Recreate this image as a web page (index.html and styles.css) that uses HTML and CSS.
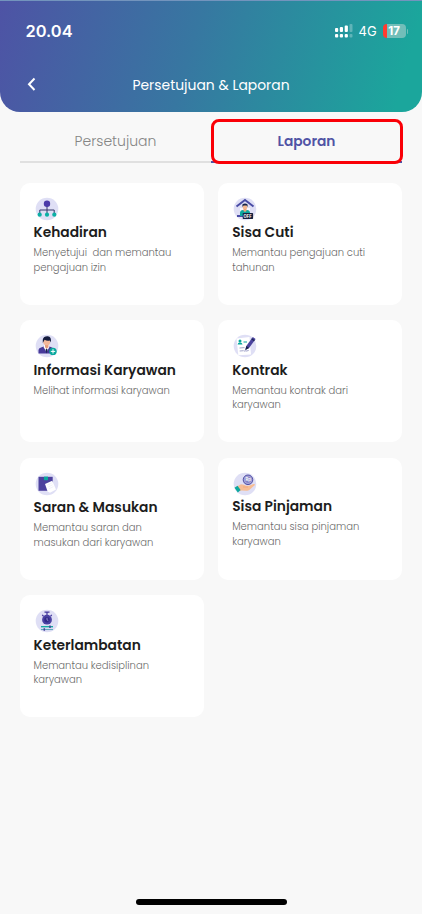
FILE: index.html
```html
<!DOCTYPE html>
<html lang="id">
<head>
<meta charset="utf-8">
<meta name="viewport" content="width=device-width, initial-scale=1">
<title>Persetujuan &amp; Laporan</title>
<link rel="stylesheet" href="styles.css">
</head>
<body>
<div class="screen">
  <header class="header">
    <div class="status">
      <span class="time">20.04</span>
      <div class="indicators">
        <svg class="signal" width="18" height="14" viewBox="0 0 18 14" fill="#fff"><rect x="0" y="4" width="3.2" height="4" rx="1"/><rect x="4.8" y="3" width="3.2" height="5" rx="1"/><rect x="9.7" y="1.5" width="3.2" height="6.5" rx="1"/><rect x="14.5" y="0" width="3" height="8" rx="1" opacity=".28"/><rect x="0" y="10" width="3.2" height="3.6" rx="1"/><rect x="4.8" y="10" width="3.2" height="3.6" rx="1"/><rect x="9.7" y="10" width="3.2" height="3.6" rx="1"/><rect x="14.5" y="10" width="3" height="3.6" rx="1" opacity=".28"/></svg>
        <span class="network">4G</span>
        <span class="battery">17</span><span class="battery-cap"></span>
      </div>
    </div>
    <div class="nav">
      <svg class="back" width="10" height="14" viewBox="0 0 10 14" fill="none" stroke="#fff" stroke-width="2"><path d="M8.5 1.5 3 7.2 8.5 13"/></svg>
      <h1 class="title">Persetujuan &amp; Laporan</h1>
    </div>
  </header>
  <nav class="tabs">
    <span class="tab">Persetujuan</span>
    <span class="tab active">Laporan</span>
  </nav>
  <main class="grid">
    <article class="card">
      <svg class="icon" viewBox="0 0 24 24"><circle cx="12" cy="12" r="11.3" fill="#dfdff5"/><path d="M12 8v10M4.8 17v-4h14.4v4" fill="none" stroke="#34366b" stroke-width="1"/><circle cx="12" cy="6.7" r="3.2" fill="#4b3aa8"/><g fill="#0bb0a5"><circle cx="4.7" cy="17.7" r="2.1"/><circle cx="12" cy="17.7" r="2.1"/><circle cx="19.3" cy="17.7" r="2.1"/></g></svg>
      <h2 class="name">Kehadiran</h2>
      <p class="desc">Menyetujui&nbsp; dan memantau<br>pengajuan izin</p>
    </article>
    <article class="card">
      <svg class="icon" viewBox="0 0 24 24"><circle cx="12" cy="12" r="11.3" fill="#dfdff5"/><path d="M7 11h10v9H7z" fill="#f7f6ff"/><path d="M3.5 9.5 12 3l8.5 6.5" fill="none" stroke="#494ca5" stroke-width="2"/><path d="M4 19h8" stroke="#494ca5" stroke-width="2"/><path d="M7 19v-3q0-3 3-3h4q3 0 3 3v3z" fill="#0ba89f"/><path d="M10.5 11h3v3l-1.5 1-1.5-1z" fill="#e9a77e"/><circle cx="12" cy="9.9" r="2.4" fill="#f4b890"/><path d="M9.4 10V7.5q2.6-2 5.2 0V10l-1-1.5h-3z" fill="#182449"/><rect x="9.7" y="16" width="10.4" height="6" rx=".7" fill="#17213f"/><text class="off" x="10.5" y="20.6">OFF</text></svg>
      <h2 class="name">Sisa Cuti</h2>
      <p class="desc">Memantau pengajuan cuti<br>tahunan</p>
    </article>
    <article class="card">
      <svg class="icon" viewBox="0 0 24 24"><circle cx="12" cy="12" r="11.3" fill="#dfdff5"/><path d="M3.5 19.5V16q0-2 2.5-2.6l4-1.4h3l4 1.5q2 .8 2 3v3z" fill="#473999"/><path d="m8.5 13 3 5 3-5-1.2-3H10z" fill="#fff"/><path d="M10 9.5h3.5v3.8l-1.8 1.5-1.7-1.5z" fill="#e79c7b"/><circle cx="11.7" cy="7.8" r="3.5" fill="#f4b89a"/><path d="M7.8 9V5.5q1-3.5 5-3.2 4 .4 3 6.2l-1-2q-3 .7-5.2-.8z" fill="#141c3d"/><path d="m11.6 14.5-1 1.3 1 3.7 1-3.7z" fill="#17224a"/><circle cx="18" cy="17.4" r="3.7" fill="#0aa99e"/><path d="M18 15.2v4.4m-2.2-2.2h4.4" stroke="#fff" stroke-width="1"/></svg>
      <h2 class="name">Informasi Karyawan</h2>
      <p class="desc">Melihat informasi karyawan</p>
    </article>
    <article class="card">
      <svg class="icon" viewBox="0 0 24 24"><circle cx="12" cy="12" r="11.3" fill="#dfdff5"/><path d="m3.5 4.5 13-1.4 1.5 17.3-12.7.9z" fill="#fff"/><circle cx="7" cy="7" r="1.5" fill="#0aa99e"/><path d="M4.6 10.5q0-2 2.4-2 2.3 0 2.5 2z" fill="#0aa99e"/><path d="M10.5 8h3.5" stroke="#0aa99e"/><path d="M6.5 14l5-.4M6.7 17l4-.3" stroke="#9a9dc4" stroke-width=".9"/><path d="M11 17.5q1-1.7 2-.4l2.7-.6" stroke="#8889bb" stroke-width=".8" fill="none"/><path d="m12.3 16 1-3.9 6.5-9 2.8 1.9-6.5 9z" fill="#4b439e"/><path d="m12.3 16 1-3.9 2.8 1.9z" fill="#17224a"/><path d="m18.6 4.8 2.8 1.9" stroke="#1c2851" stroke-width="1.2"/></svg>
      <h2 class="name">Kontrak</h2>
      <p class="desc">Memantau kontrak dari<br>karyawan</p>
    </article>
    <article class="card">
      <svg class="icon" viewBox="0 0 24 24"><circle cx="12" cy="12" r="11.3" fill="#dfdff5"/><path d="M3.5 4.8h14.2v14H3.5z" fill="#4d429e"/><path d="M9 4.6h4v3.6H9z" fill="#0aa99e"/><path d="m10 12 7.2-3.3 3.8 8.7-6 3.4-2.4-1.2z" fill="#fff"/><path d="m12.4 13.2 4.4-2.2m-3.6 4 4.4-2.2m-3.6 4 4.4-2.2" stroke="#e5e4f5" stroke-width=".5"/></svg>
      <h2 class="name">Saran &amp; Masukan</h2>
      <p class="desc">Memantau saran dan<br>masukan dari karyawan</p>
    </article>
    <article class="card raised">
      <svg class="icon" viewBox="0 0 24 24"><circle cx="12" cy="12" r="11.3" fill="#dfdff5"/><circle cx="15" cy="7.8" r="4.8" fill="#8583c5" stroke="#5150a5" stroke-width="1"/><circle cx="15" cy="7.8" r="3.7" fill="none" stroke="#d0cfee" stroke-width=".5"/><text class="off" x="12.4" y="9.3">Rp</text><path d="m4 14.5 4-2.3 3 .5 2 1h3l4.5-1.8q1.9-.2 1.4 1.2l-5.6 5q-1.3 1-3 .7l-4.7-.3L6 19.3z" fill="#f7bd94"/><path d="M10 15h5" stroke="#eba176" stroke-width=".7"/><path d="m1.5 15.7 3-2 3.1 4.4-2.8 2.5z" fill="#0ba89f"/></svg>
      <h2 class="name">Sisa Pinjaman</h2>
      <p class="desc">Memantau sisa pinjaman<br>karyawan</p>
    </article>
    <article class="card">
      <svg class="icon" viewBox="0 0 24 24"><circle cx="12" cy="12" r="11.3" fill="#dfdff5"/><path d="M9.5 3.2h5M12 3.2v3" stroke="#42369b" stroke-width="1.2"/><path d="m7.2 5.8 1.2 1.2m8.4-1.2-1.2 1.2" stroke="#42369b" stroke-width="1.2"/><circle cx="12" cy="10.7" r="4.9" fill="#4b42a3"/><circle cx="12" cy="10.7" r="2.7" fill="#322a89"/><path d="M12 8.8v2.1l1.3.8" fill="none" stroke="#a5a2dc" stroke-width=".8"/><path d="M6 17.7h12" stroke="#0ba89f" stroke-width="1.3"/><path d="M6 20.5h12" stroke="#62a8bd" stroke-width="1.1"/><path d="M15 16.5v2.4M9.3 19.3v2.4" stroke="#44429b" stroke-width="1.5"/></svg>
      <h2 class="name">Keterlambatan</h2>
      <p class="desc">Memantau kedisiplinan<br>karyawan</p>
    </article>
  </main>
  <div class="home-indicator"></div>
</div>
</body>
</html>
```
FILE: styles.css
```css
* { box-sizing: border-box; }
body { margin: 0; background: #f8f8f8; font-family: Poppins, Inter, sans-serif; }
h1, h2, p { margin: 0; }
.screen { width: 422px; height: 914px; display: flex; flex-direction: column; background: #f8f8f8; overflow: hidden; }
.header { height: 111.5px; flex: none; border-top: 1px solid #7394bd; border-radius: 0 0 20px 20px; background: linear-gradient(105deg, #4e53a5 0%, #3777a1 45%, #1ba69c 94%); color: #fff; }
.status { height: 60px; padding: 0 14px 0 25.5px; display: flex; align-items: center; justify-content: space-between; }
.time { font: 600 16.4px/20px Inter, sans-serif; }
.indicators { display: flex; align-items: center; }
.signal { margin-right: 5.5px; }
.network { width: 24px; font: 400 13px/16px Inter, sans-serif; }
.battery { width: 23px; height: 14px; border-radius: 4px; background: linear-gradient(90deg, #ff3b30 4px, #72beb9 4px); font: 700 11.5px/14px Inter, sans-serif; text-align: center; }
.battery-cap { width: 1.5px; height: 5px; margin-left: 1px; border-radius: 0 2px 2px 0; background: #72beb9; }
.nav { display: grid; grid-template-columns: 20px 1fr 20px; align-items: center; padding: 0 26px; height: 46px; }
.title { padding-top: 2px; font-size: 13.9px; font-weight: 400; line-height: 20px; text-align: center; white-space: nowrap; }
.tabs { height: 51.5px; flex: none; margin: 0 20px; padding-top: 7.5px; display: grid; grid-template-columns: 191px 191px; }
.tab { height: 44px; border-bottom: 2px solid #e0e0e0; color: #858585; font-size: 14px; line-height: 45px; text-align: center; font-weight: 300; }
.tab.active { position: relative; border-color: #5053a5; color: #5053a5; font-size: 13.8px; font-weight: 600; }
.tab.active::after { content: ""; position: absolute; inset: 0 -1px -3px 0; border: 3px solid #fa0007; border-radius: 8px; }
.grid { margin: 19.6px 20px 0; display: grid; grid-template-columns: 184px 184px; grid-auto-rows: 122.2px; gap: 15.3px 14px; }
.card { padding: 14.4px 13.5px; border-radius: 10px; background: #fff; }
.card:nth-child(even) { padding-left: 14.2px; }
.icon { display: block; width: 24px; height: 24px; margin-left: 1.2px; }
.off { font: 700 4.2px Inter, sans-serif; fill: #fff; }
.name { margin-top: 1.25px; font-size: 13.8px; line-height: 21px; font-weight: 600; color: #1d1d1d; white-space: nowrap; }
.desc { margin-top: 3px; font-size: 10px; line-height: 14.7px; font-weight: 300; color: #6c6c6c; white-space: nowrap; }
.raised .name { margin-top: .2px; }
.home-indicator { width: 151px; height: 6px; margin: auto auto 9px 136px; border-radius: 3px; background: #000; }
```
